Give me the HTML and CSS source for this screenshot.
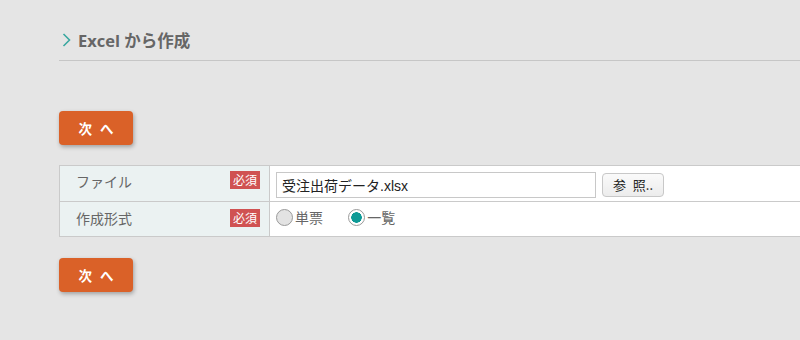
FILE: index.html
```html
<!DOCTYPE html>
<html lang="ja">
<head>
  <meta charset="UTF-8" />
  <title>Excel から作成</title>
  <link rel="stylesheet" href="styles.css">
</head>
<body>
  <div class="page">
    <h1 class="title">
      <svg class="chev" width="9" height="14" viewBox="0 0 9 14"><path d="M1.5 1 L7.5 7 L1.5 13" fill="none" stroke="#3aa8a0" stroke-width="1.6"/></svg>
      Excel から作成
    </h1>

    <button class="next">次 へ</button>

    <table class="form">
      <tr class="row-file">
        <th><span class="label">ファイル</span><span class="req">必須</span></th>
        <td>
          <div class="file">
            <input class="file-name" type="text" value="受注出荷データ.xlsx">
            <button class="browse">参 照..</button>
          </div>
        </td>
      </tr>
      <tr class="row-type">
        <th><span class="label">作成形式</span><span class="req">必須</span></th>
        <td>
          <label class="radio"><input type="radio" name="kind"><span>単票</span></label>
          <label class="radio"><input type="radio" name="kind" checked><span>一覧</span></label>
        </td>
      </tr>
    </table>

    <button class="next">次 へ</button>
  </div>
</body>
</html>
```

FILE: styles.css
```css
html, body {
  margin: 0;
  overflow: hidden;
}

body {
  background-color: #e5e5e5;
  font-family: "Open Sans", "Noto Sans CJK JP", sans-serif;
  color: #555;
  width: 800px;
  height: 340px;
}

.page {
  margin-left: 59px;
  padding-top: 25px;
}

.title {
  display: flex;
  align-items: center;
  gap: 7px;
  margin: 0;
  height: 29px;
  padding-left: 3px;
  padding-bottom: 6px;
  font-size: 16.5px;
  font-weight: bold;
  color: #666;
  border-bottom: 1px solid #c6c6c6;
}

.chev {
  margin-top: 1px;
}

.next {
  display: block;
  width: 74px;
  height: 34px;
  padding: 0;
  border: none;
  border-radius: 4px;
  background-color: #da6128;
  color: #fff;
  font-family: "Noto Sans CJK JP", sans-serif;
  font-size: 13.5px;
  font-weight: bold;
  word-spacing: 5px;
  box-shadow: 1px 2px 4px rgba(0, 0, 0, 0.3);
}

.title + .next {
  margin-top: 50px;
}

.form {
  margin: 20px 0 21px;
  width: 780px;
  border-collapse: collapse;
  background-color: #fff;
}

.form th, .form td {
  border: 1px solid #cacaca;
  padding: 0 6px;
  text-align: left;
  font-weight: normal;
}

.form th {
  width: 184px;
  background-color: #ebf2f2;
  padding: 0 9px 0 16px;
  font-size: 14px;
  color: #666;
}

.row-file th, .row-file td {
  height: 35px;
}

.row-type th, .row-type td {
  height: 34px;
}

.form th span.label {
  float: left;
  line-height: 20px;
  margin-top: -4px;
}

.row-type th span.label {
  margin-top: 0;
}

.req {
  float: right;
  width: 30px;
  height: 18px;
  line-height: 17px;
  text-align: center;
  background-color: #d05252;
  color: #fff;
  font-size: 12px;
  font-family: "Noto Sans CJK JP", sans-serif;
}

.row-file .req {
  margin-top: -5px;
}

.file {
  display: flex;
  align-items: center;
  gap: 6px;
  margin-top: 2px;
}

.file-name {
  box-sizing: border-box;
  width: 320px;
  height: 26px;
  border: 1px solid #c8c8c8;
  padding: 0 5px;
  font-family: "Liberation Sans", "Noto Sans CJK JP", sans-serif;
  font-size: 14px;
  color: #222;
  margin: 0;
}

.browse {
  box-sizing: border-box;
  width: 62px;
  height: 24px;
  border: 1px solid #c8c8c8;
  border-radius: 4px;
  background: linear-gradient(#fafafa, #ececec);
  font-family: "Noto Sans CJK JP", sans-serif;
  font-size: 13px;
  color: #222;
  word-spacing: 4px;
  padding: 0;
}

.radio {
  display: inline-flex;
  align-items: center;
  margin-right: 21px;
  font-size: 14px;
  color: #666;
  font-family: "Noto Sans CJK JP", sans-serif;
}

.radio input {
  appearance: none;
  -webkit-appearance: none;
  box-sizing: border-box;
  width: 17px;
  height: 17px;
  margin: 0 2px 0 0;
  border: 1px solid #9a9a9a;
  border-radius: 50%;
  background-color: #e3e3e3;
}

.radio input:checked {
  background-color: #fff;
  background-image: radial-gradient(circle, #0e9a96 0 5px, #fff 5.5px);
}
```
